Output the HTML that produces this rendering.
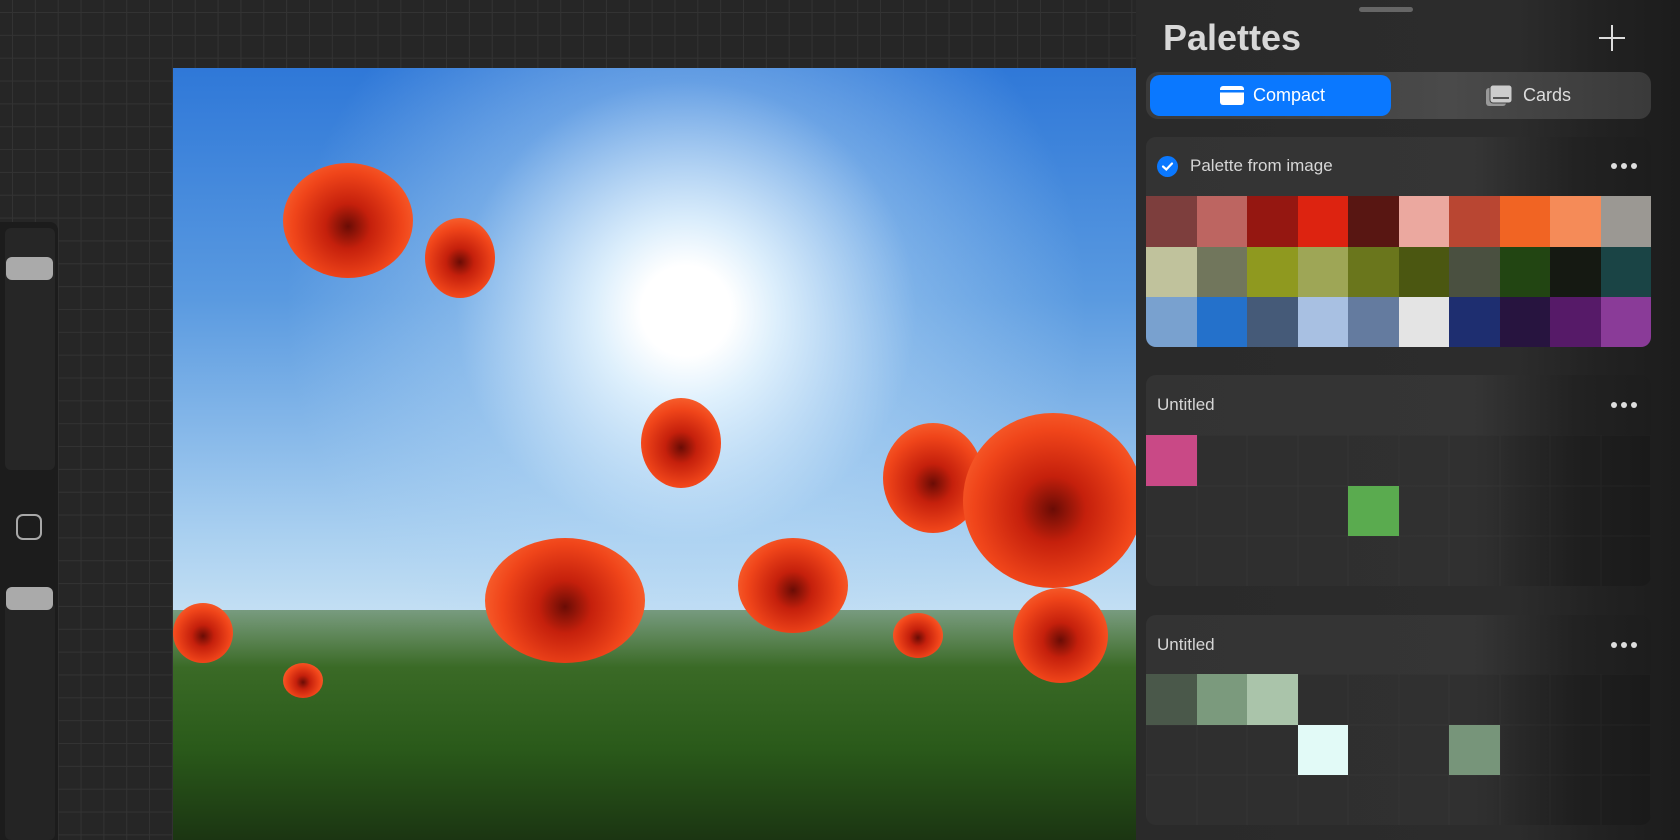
<!DOCTYPE html>
<html><head><meta charset="utf-8"><style>
*{margin:0;padding:0;box-sizing:border-box}
body{width:1680px;height:840px;overflow:hidden;background:#262626;font-family:"Liberation Sans",sans-serif;position:relative}
.grid{position:absolute;inset:0;background-image:linear-gradient(#333 1px,transparent 1px),linear-gradient(90deg,#333 1px,transparent 1px);background-size:22.85px 22.85px;background-position:12px 12px}
.side{position:absolute;left:0;top:222px;width:58px;height:618px;background:#1c1c1c;border-radius:0 8px 0 0}
.sl{position:absolute;left:5px;width:50px;background:#262626;border-radius:6px}
.h{position:absolute;left:6px;width:47px;height:23px;background:#aaa;border-radius:6px}
.img{position:absolute;left:173px;top:68px;width:963px;height:772px;overflow:hidden;
background:radial-gradient(circle at 513px 243px,#fff 0,#fff 45px,rgba(235,248,255,.9) 90px,rgba(180,215,245,.4) 230px,transparent 400px),linear-gradient(180deg,#2f78d8 0%,#5a9ae0 30%,#a8cff0 60%,#cfe6f5 75%)}
.grass{position:absolute;left:0;bottom:0;width:100%;height:230px;background:linear-gradient(180deg,rgba(70,110,50,.6),#3a6a26 25%,#2a5a1a 60%,#1b3512)}
.p{position:absolute;border-radius:50%;background:radial-gradient(circle at 50% 55%,#6a0c05 0,#c5200c 25%,#f0451a 60%,#ff7a40 100%)}
.panel{position:absolute;left:1136px;top:0;width:544px;height:840px;background:linear-gradient(90deg,#2a2a2a 0,#2c2c2c 70%,#222 85%,#1c1c1c 100%)}
.drag{position:absolute;left:223px;top:7px;width:54px;height:5px;border-radius:3px;background:#666}
.title{position:absolute;left:27px;top:17px;font-size:36px;font-weight:bold;color:#d8d8d8}
.plus{position:absolute;left:462px;top:24px}
.seg{position:absolute;left:10px;top:72px;width:505px;height:47px;border-radius:12px;background:linear-gradient(90deg,#3a3a3a,#4a4a4a 60%,#3a3a3a)}
.cb{position:absolute;left:4px;top:3px;width:241px;height:41px;border-radius:10px;background:#0a78ff;color:#fff;font-size:18px;line-height:41px}
.card{position:absolute;left:10px;width:505px;border-radius:10px;background:linear-gradient(90deg,#333 0,#353535 65%,#222 85%,#1d1d1d 100%);overflow:hidden}
.ct{position:absolute;left:11px;font-size:17px;color:#d6d6d6}
.dots{position:absolute;right:14px;display:flex;gap:4px}
.dots i{width:6px;height:6px;border-radius:50%;background:#ddd;display:block}
.sw{position:absolute;left:0;display:grid;grid-template-columns:repeat(10,50.5px);}
.sw div{height:50.5px}
.e{background:rgba(0,0,0,.08);box-shadow:inset 0 0 0 .5px rgba(255,255,255,.03)}
</style></head><body>
<div class="grid"></div>
<div class="side">
 <div class="sl" style="top:6px;height:242px"></div>
 <div class="h" style="top:35px"></div>
 <div style="position:absolute;left:16px;top:292px;width:26px;height:26px;border:2.5px solid #a8a8a8;border-radius:7px"></div>
 <div class="sl" style="top:380px;height:238px;background:#242424"></div>
 <div class="h" style="top:365px"></div>
</div>
<div class="img">
 <div class="grass"></div>
 <div class="p" style="left:110px;top:95px;width:130px;height:115px"></div>
 <div class="p" style="left:252px;top:150px;width:70px;height:80px"></div>
 <div class="p" style="left:468px;top:330px;width:80px;height:90px"></div>
 <div class="p" style="left:565px;top:470px;width:110px;height:95px"></div>
 <div class="p" style="left:312px;top:470px;width:160px;height:125px"></div>
 <div class="p" style="left:710px;top:355px;width:100px;height:110px"></div>
 <div class="p" style="left:790px;top:345px;width:180px;height:175px"></div>
 <div class="p" style="left:840px;top:520px;width:95px;height:95px"></div>
 <div class="p" style="left:0;top:535px;width:60px;height:60px"></div>
 <div class="p" style="left:110px;top:595px;width:40px;height:35px"></div>
 <div class="p" style="left:720px;top:545px;width:50px;height:45px"></div>
</div>
<div class="panel">
 <div class="drag"></div>
 <div class="title">Palettes</div>
 <svg class="plus" width="28" height="28" viewBox="0 0 28 28"><path d="M14 1V27M1 14H27" stroke="#ddd" stroke-width="2"/></svg>
 <div class="seg">
  <div class="cb"><svg style="position:absolute;left:70px;top:11px" width="24" height="19" viewBox="0 0 24 19"><rect x="0" y="0" width="24" height="19" rx="3" fill="#fff"/><rect x="0" y="4" width="24" height="2.5" fill="#0a78ff"/></svg><span style="position:absolute;left:103px">Compact</span></div>
  <svg style="position:absolute;left:340px;top:13px" width="26" height="21" viewBox="0 0 26 21"><rect x="0" y="3" width="20" height="18" rx="3" fill="#999"/><rect x="4" y="0" width="22" height="18" rx="3" fill="#ccc" stroke="#444" stroke-width="1"/><rect x="7" y="12" width="16" height="2" fill="#555"/></svg>
  <span style="position:absolute;left:377px;top:13px;color:#ddd;font-size:18px">Cards</span>
 </div>

 <div class="card" style="top:137px;height:210px">
  <div style="position:absolute;left:11px;top:19px;width:21px;height:21px;border-radius:50%;background:#0a78ff"><svg width="21" height="21" viewBox="0 0 21 21"><path d="M6 10.5L9.3 13.5L15 7.5" stroke="#fff" stroke-width="2.2" fill="none" stroke-linecap="round"/></svg></div>
  <div class="ct" style="left:44px;top:19px">Palette from image</div>
  <div class="dots" style="top:26px"><i></i><i></i><i></i></div>
  <div class="sw" style="top:59px">
   <div style="background:#7d3e3d"></div><div style="background:#bd6561"></div><div style="background:#951711"></div><div style="background:#dd2310"></div><div style="background:#581612"></div><div style="background:#eba89f"></div><div style="background:#b94632"></div><div style="background:#f16423"></div><div style="background:#f58b58"></div><div style="background:#9b9893"></div>
   <div style="background:#c0c29c"></div><div style="background:#71765c"></div><div style="background:#8f991f"></div><div style="background:#9ea656"></div><div style="background:#6a761c"></div><div style="background:#4b5711"></div><div style="background:#4a5040"></div><div style="background:#224512"></div><div style="background:#151912"></div><div style="background:#1a4445"></div>
   <div style="background:#79a1cf"></div><div style="background:#2471cb"></div><div style="background:#455a78"></div><div style="background:#a8c0e2"></div><div style="background:#647b9f"></div><div style="background:#e4e4e4"></div><div style="background:#1e2e70"></div><div style="background:#27143f"></div><div style="background:#561a68"></div><div style="background:#8a3b98"></div>
  </div>
 </div>

 <div class="card" style="top:375px;height:211px">
  <div class="ct" style="top:20px">Untitled</div>
  <div class="dots" style="top:27px"><i></i><i></i><i></i></div>
  <div class="sw" style="top:60px">
   <div style="background:#c94986"></div><div class="e"></div><div class="e"></div><div class="e"></div><div class="e"></div><div class="e"></div><div class="e"></div><div class="e"></div><div class="e"></div><div class="e"></div>
   <div class="e"></div><div class="e"></div><div class="e"></div><div class="e"></div><div style="background:#5aab4f"></div><div class="e"></div><div class="e"></div><div class="e"></div><div class="e"></div><div class="e"></div>
   <div class="e"></div><div class="e"></div><div class="e"></div><div class="e"></div><div class="e"></div><div class="e"></div><div class="e"></div><div class="e"></div><div class="e"></div><div class="e"></div>
  </div>
 </div>

 <div class="card" style="top:615px;height:210px">
  <div class="ct" style="top:20px">Untitled</div>
  <div class="dots" style="top:27px"><i></i><i></i><i></i></div>
  <div class="sw" style="top:59px">
   <div style="background:#4a584a"></div><div style="background:#7b9a7d"></div><div style="background:#aac4aa"></div><div class="e"></div><div class="e"></div><div class="e"></div><div class="e"></div><div class="e"></div><div class="e"></div><div class="e"></div>
   <div class="e"></div><div class="e"></div><div class="e"></div><div style="background:#e2faf7"></div><div class="e"></div><div class="e"></div><div style="background:#77957a"></div><div class="e"></div><div class="e"></div><div class="e"></div>
   <div class="e"></div><div class="e"></div><div class="e"></div><div class="e"></div><div class="e"></div><div class="e"></div><div class="e"></div><div class="e"></div><div class="e"></div><div class="e"></div>
  </div>
 </div>
</div>
</body></html>
